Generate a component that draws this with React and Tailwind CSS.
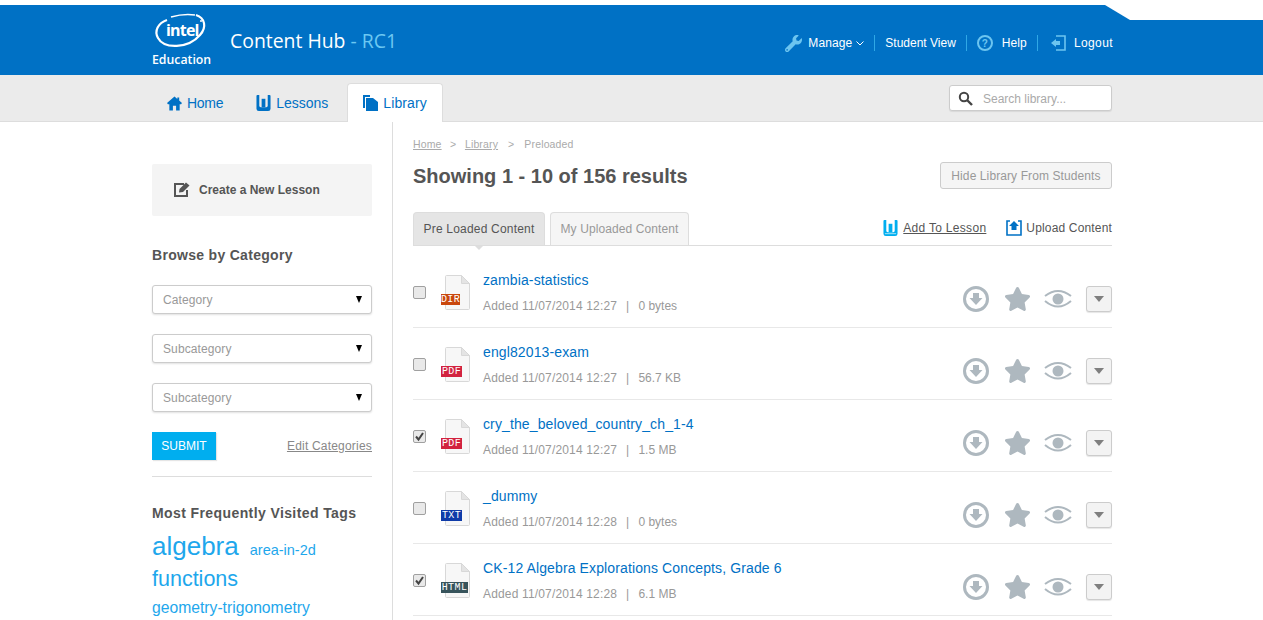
import { FaWrench, FaStar } from 'react-icons/fa';

const rows = [
  { name: 'zambia-statistics', added: '11/07/2014 12:27', size: '0 bytes', type: 'DIR', badge: 'bg-[#c9470d] w-[19px]', checked: false },
  { name: 'engl82013-exam', added: '11/07/2014 12:27', size: '56.7 KB', type: 'PDF', badge: 'bg-[#d2233f] w-[21px]', checked: false },
  { name: 'cry_the_beloved_country_ch_1-4', added: '11/07/2014 12:27', size: '1.5 MB', type: 'PDF', badge: 'bg-[#d2233f] w-[21px]', checked: true },
  { name: '_dummy', added: '11/07/2014 12:28', size: '0 bytes', type: 'TXT', badge: 'bg-[#0f3ba8] w-[21px]', checked: false },
  { name: 'CK-12 Algebra Explorations Concepts, Grade 6', added: '11/07/2014 12:28', size: '6.1 MB', type: 'HTML', badge: 'bg-[#37545c] w-[27px]', checked: true },
];

function BookIcon({ className, fill, shade }) {
  return (
    <svg viewBox="0 0 16 17" className={className}>
      <path d="M0.5 1 Q0.5 0 1.5 0 H3.5 V11.5 Q3.5 13 5 13 H11 Q12.5 13 12.5 11.5 V0 H14.5 Q15.5 0 15.5 1 V14.5 Q15.5 17 13 17 H3 Q0.5 17 0.5 14.5 Z" fill={fill} />
      <path d="M6 4 H10 V13 H6 Z" fill={fill} />
      {shade && <path d="M2 14.5 H14" stroke={shade} strokeWidth="1.2" />}
    </svg>
  );
}

function DownloadIcon() {
  return (
    <svg viewBox="0 0 26 26" className="w-[26px] h-[26px]">
      <circle cx="13" cy="13" r="11.5" fill="none" stroke="#aeb8bf" strokeWidth="3" />
      <path d="M10 7 H16 V12 H19.5 L13 19 L6.5 12 H10 Z" fill="#aeb8bf" />
    </svg>
  );
}

function EyeIcon() {
  return (
    <svg viewBox="0 0 28 20" className="w-[28px] h-[20px]">
      <path d="M1 7 Q14 -3 27 7" fill="none" stroke="#aeb8bf" strokeWidth="2" />
      <path d="M1 12 Q14 23 27 12" fill="none" stroke="#aeb8bf" strokeWidth="2" />
      <circle cx="14" cy="10" r="5.5" fill="#aeb8bf" />
    </svg>
  );
}

function FileIcon({ type, badge }) {
  return (
    <div className="relative w-[29px] h-[35px] shrink-0">
      <svg viewBox="0 0 25 35" className="absolute left-[4px] top-0 w-[25px] h-[35px]">
        <path d="M0.5 1.5 Q0.5 0.5 1.5 0.5 H16.5 L24.5 8.5 V33.5 Q24.5 34.5 23.5 34.5 H1.5 Q0.5 34.5 0.5 33.5 Z" fill="#f7f7f7" stroke="#d8d8d8" />
        <path d="M16.5 0.5 V8.5 H24.5 Z" fill="#e4e4e4" stroke="#d8d8d8" />
      </svg>
      <span className={`absolute left-0 top-[19px] h-[11px] flex items-center justify-center text-white text-[10px] tracking-[0.4px] leading-none font-['Liberation_Mono',monospace] ${badge}`}>{type}</span>
    </div>
  );
}

function Row({ row }) {
  return (
    <div className="h-[72px] flex border-b border-[#e8e8e8]">
      <div className="relative w-[13px] h-[13px] mt-[30px] shrink-0">
        <input type="checkbox" defaultChecked={row.checked} className="appearance-none block w-[13px] h-[13px] rounded-[2px] bg-[#e9e9e9] border border-[#a0a0a0]" />
        {row.checked && (
          <svg viewBox="0 0 13 13" className="absolute left-0 top-0 w-[13px] h-[13px] pointer-events-none">
            <path d="M3 6.5 L5.5 9.5 L10 3" fill="none" stroke="#444" strokeWidth="2" />
          </svg>
        )}
      </div>
      <div className="ml-[15px] mt-[19px]">
        <FileIcon type={row.type} badge={row.badge} />
      </div>
      <div className="ml-[13px] mt-[15px]">
        <a className="block text-[14px] leading-[18px] tracking-[0.12px] text-[#0071c5]">{row.name}</a>
        <p className="mt-[10px] text-[12px] leading-[14px] tracking-[0.16px] text-[#999]">
          Added {row.added}<span className="mx-[9px]">|</span><span className="tracking-normal">{row.size}</span>
        </p>
      </div>
      <div className="ml-auto mt-[30px] flex items-start">
        <DownloadIcon />
        <FaStar className="ml-[15px] mt-0 w-[27px] h-[26px] text-[#aeb8bf]" />
        <div className="ml-[13px] mt-[3px]"><EyeIcon /></div>
        <button className="ml-[14px] w-[26px] h-[26px] flex items-center justify-center bg-[#f3f3f3] border border-[#ccc] rounded-[3px] shadow-[0_1px_1px_rgba(0,0,0,0.1)]">
          <span className="block w-0 h-0 border-x-[5px] border-x-transparent border-t-[6px] border-t-[#7f7f7f]" />
        </button>
      </div>
    </div>
  );
}

function SelectBox({ label }) {
  return (
    <div className="mt-[20px] h-[29px] flex items-center justify-between pl-[10px] pr-[9px] bg-white border border-[#ccc] rounded-[3px] shadow-[0_1px_2px_rgba(0,0,0,0.12)] text-[12px] tracking-[0.1px] text-[#999]">
      {label}
      <span className="block w-0 h-0 border-x-[3.5px] border-x-transparent border-t-[7px] border-t-black" />
    </div>
  );
}

export default function App() {
  return (
    <div className="h-[620px] overflow-hidden bg-white pt-[5px] font-['Liberation_Sans',Arial,sans-serif] text-[#555]">
      <header className="relative h-[70px] bg-[#0071c5]">
        <svg viewBox="0 0 158 15" className="absolute right-0 top-0 w-[158px] h-[15px]">
          <path d="M0 0 L25 15 H158 V0 Z" fill="#fff" />
        </svg>
        <div className="relative w-[961px] h-full ml-[152px] flex items-center justify-between">
          <div className="flex items-center">
            <div className="relative w-[60px] h-[70px] text-white">
              <svg viewBox="0 0 60 50" className="absolute left-0 top-0 w-[60px] h-[50px]">
                <path d="M15 15 C6 18 2 26 6 33 C12 44 36 44 48 30 C55 22 53 13 44 10" fill="none" stroke="#fff" strokeWidth="2.2" />
                <path d="M19 12 C26 10 36 9 43 10" fill="none" stroke="#fff" strokeWidth="1.6" />
                <circle cx="49" cy="16" r="1" fill="#fff" />
              </svg>
              <span className="absolute left-[14px] top-[15px] text-[16px] leading-[20px] font-bold tracking-[-0.8px] font-['Open_Sans',sans-serif]">intel</span>
              <span className="absolute left-0 top-[47px] text-[12.3px] leading-[16px] font-semibold font-['Open_Sans',sans-serif]">Education</span>
            </div>
            <h1 className="ml-[18px] mt-[1px] text-[19.4px] text-white font-['Open_Sans',sans-serif]">
              Content Hub <span className="text-[#6cc8f2]">- RC1</span>
            </h1>
          </div>
          <nav className="flex items-center text-[12px] tracking-[0.1px] text-white mt-[6px]">
            <FaWrench className="w-[17px] h-[17px] text-[#6cc5f0]" />
            <span className="ml-[6px]">Manage</span>
            <svg viewBox="0 0 8 5" className="ml-[4px] w-[8px] h-[5px]"><path d="M0.5 0.5 L4 4 L7.5 0.5" fill="none" stroke="#fff" /></svg>
            <span className="ml-[10px] mr-[10px] h-[16px] border-l border-[#2fa8e6]" />
            <span className="tracking-normal">Student View</span>
            <span className="ml-[10px] mr-[10px] h-[16px] border-l border-[#2fa8e6]" />
            <span className="w-[16px] h-[16px] rounded-full border-2 border-[#6cc5f0] text-[#6cc5f0] text-[10px] font-bold flex items-center justify-center">?</span>
            <span className="ml-[9px]">Help</span>
            <span className="ml-[10px] mr-[12px] h-[16px] border-l border-[#2fa8e6]" />
            <svg viewBox="0 0 16 16" className="w-[16px] h-[16px]">
              <path d="M6 1 H15 V15 H6" fill="none" stroke="#6cc5f0" strokeWidth="1.6" />
              <path d="M1 8 L6 4 V6 H10 V10 H6 V12 Z" fill="#6cc5f0" />
            </svg>
            <span className="ml-[8px] tracking-[0.4px]">Logout</span>
          </nav>
        </div>
      </header>

      <div className="h-[47px] bg-[#ebebeb] border-b border-[#ddd]">
        <div className="w-[960px] h-full ml-[152px] flex justify-between">
          <div className="flex items-end text-[14px] text-[#0071c5]">
            <a className="h-[39px] pt-[3px] pl-[15px] pr-[18px] flex items-center gap-[5px]">
              <svg viewBox="0 0 16 15" className="w-[15px] h-[15px]">
                <path d="M8 0 L11 2.6 V1 H13 V4.4 L16 7 L15 8.2 H13.5 V15 H9.7 V10 H6.3 V15 H2.5 V8.2 H1 L0 7 Z" fill="#0071c5" />
              </svg>
              <span className="tracking-[-0.3px]">Home</span>
            </a>
            <a className="h-[39px] pt-[3px] pl-[15px] pr-[19px] flex items-center gap-[5px]">
              <BookIcon className="w-[15px] h-[16px]" fill="#0071c5" />Lessons
            </a>
            <a className="h-[39px] w-[96px] pl-[15px] flex items-center gap-[5px] tracking-[0.1px] bg-white border border-b-0 border-[#ddd] rounded-t-[4px] relative top-[1px]">
              <svg viewBox="0 0 15 16" className="w-[15px] h-[16px]">
                <path d="M0 0 H7 V2 H2 V13 H0 Z" fill="#0071c5" />
                <path d="M3 3 H10 L15 7 V16 H3 Z" fill="#0071c5" />
              </svg>
              Library
            </a>
          </div>
          <div className="mt-[10px] w-[163px] h-[26px] flex items-center pl-[8px] pt-[1px] bg-white border border-[#ccc] rounded-[3px] shadow-[0_1px_1px_rgba(0,0,0,0.08)] text-[12px] text-[#aaa]">
            <svg viewBox="0 0 15 15" className="w-[15px] h-[15px] mb-[1px]">
              <circle cx="6" cy="6" r="4.2" fill="none" stroke="#444" strokeWidth="2" />
              <path d="M9 9 L14 14" stroke="#444" strokeWidth="2.4" />
            </svg>
            <span className="ml-[10px]">Search library...</span>
          </div>
        </div>
      </div>

      <div className="w-[960px] ml-[152px] flex">
        <aside className="w-[241px] h-[500px] shrink-0 pr-[20px] pt-[42px] border-r border-[#ddd]">
          <div className="h-[52px] flex items-center pl-[22px] bg-[#f4f4f4] rounded-[2px] text-[12px] font-bold">
            <svg viewBox="0 0 16 15" className="w-[16px] h-[15px] mb-[2px]">
              <path d="M10 2 H1 V14 H13 V8" fill="none" stroke="#555" strokeWidth="2" />
              <path d="M5 10.5 L5.5 7 L12 0.5 L15.5 3.5 L9 10 Z" fill="#555" />
            </svg>
            <span className="ml-[9px]">Create a New Lesson</span>
          </div>
          <h2 className="mt-[30px] text-[14px] leading-[18px] font-bold tracking-[0.3px]">Browse by Category</h2>
          <div className="pt-[1px]">
            <SelectBox label="Category" />
            <SelectBox label="Subcategory" />
            <SelectBox label="Subcategory" />
          </div>
          <div className="mt-[20px] flex items-center justify-between">
            <button className="w-[64px] h-[28px] bg-[#00aeef] text-white text-[12px] shadow-[1px_1px_1px_rgba(0,0,0,0.1)]">SUBMIT</button>
            <a className="text-[12px] tracking-[0.2px] text-[#888] underline">Edit Categories</a>
          </div>
          <div className="mt-[16px] border-t border-[#ddd]" />
          <h2 className="mt-[27px] text-[14px] leading-[18px] font-bold tracking-[0.4px]">Most Frequently Visited Tags</h2>
          <div className="text-[#1ea7ec]">
            <div className="mt-[5px] h-[34px] flex items-baseline">
              <a className="text-[26px]">algebra</a>
              <a className="ml-[11px] text-[14.5px]">area-in-2d</a>
            </div>
            <a className="block mt-[4px] text-[21.5px] leading-[28px]">functions</a>
            <a className="block mt-[4px] text-[15.7px] leading-[22px]">geometry-trigonometry</a>
          </div>
        </aside>

        <main className="flex-1 pl-[20px]">
          <div className="mt-[17px] h-[12px] flex items-center text-[10.5px] tracking-[0.15px] text-[#aaa]">
            <a className="underline">Home</a>
            <span className="mx-[8.5px]">&gt;</span>
            <a className="underline">Library</a>
            <span className="mx-[10px]">&gt;</span>
            <span>Preloaded</span>
          </div>
          <div className="mt-[11px] h-[27px] flex items-start justify-between">
            <h2 className="mt-[1px] text-[20px] leading-[27px] font-bold">Showing 1 - 10 of 156 results</h2>
            <button className="w-[172px] h-[27px] bg-[#f5f5f5] border border-[#ccc] rounded-[3px] text-[12px] tracking-[0.1px] text-[#999]">Hide Library From Students</button>
          </div>
          <div className="relative mt-[23px] h-[34px] flex items-end border-b border-[#ddd] text-[12px]">
            <div className="relative w-[132px] h-[33px] flex items-center justify-center bg-[#e5e5e5] border border-b-0 border-[#ddd] rounded-t-[4px] tracking-[0.2px] text-[#555]">
              Pre Loaded Content
              <span className="absolute left-[60px] -bottom-[5px] w-0 h-0 border-x-[5px] border-x-transparent border-t-[5px] border-t-[#ddd]" />
            </div>
            <div className="ml-[5px] w-[139px] h-[33px] flex items-center justify-center bg-[#f5f5f5] border border-b-0 border-[#ddd] rounded-t-[4px] tracking-[0.1px] text-[#999]">My Uploaded Content</div>
            <div className="ml-auto h-[33px] pb-[1px] flex items-center">
              <BookIcon className="w-[15px] h-[16px]" fill="#00aeef" shade="#8fdcf8" />
              <a className="ml-[5px] underline tracking-[0.3px]">Add To Lesson</a>
              <svg viewBox="0 0 16 16" className="ml-[20px] w-[16px] h-[16px]">
                <path d="M4 1 H1 V15 H15 V1 H12" fill="none" stroke="#0071c5" strokeWidth="1.6" />
                <path d="M8 1 L13 6 H10.5 V10 H5.5 V6 H3 Z" fill="#0071c5" />
              </svg>
              <span className="ml-[4px] tracking-[0.16px]">Upload Content</span>
            </div>
          </div>
          <div className="pt-[10px]">
            {rows.map((row) => <Row key={row.name} row={row} />)}
          </div>
        </main>
      </div>
    </div>
  );
}
